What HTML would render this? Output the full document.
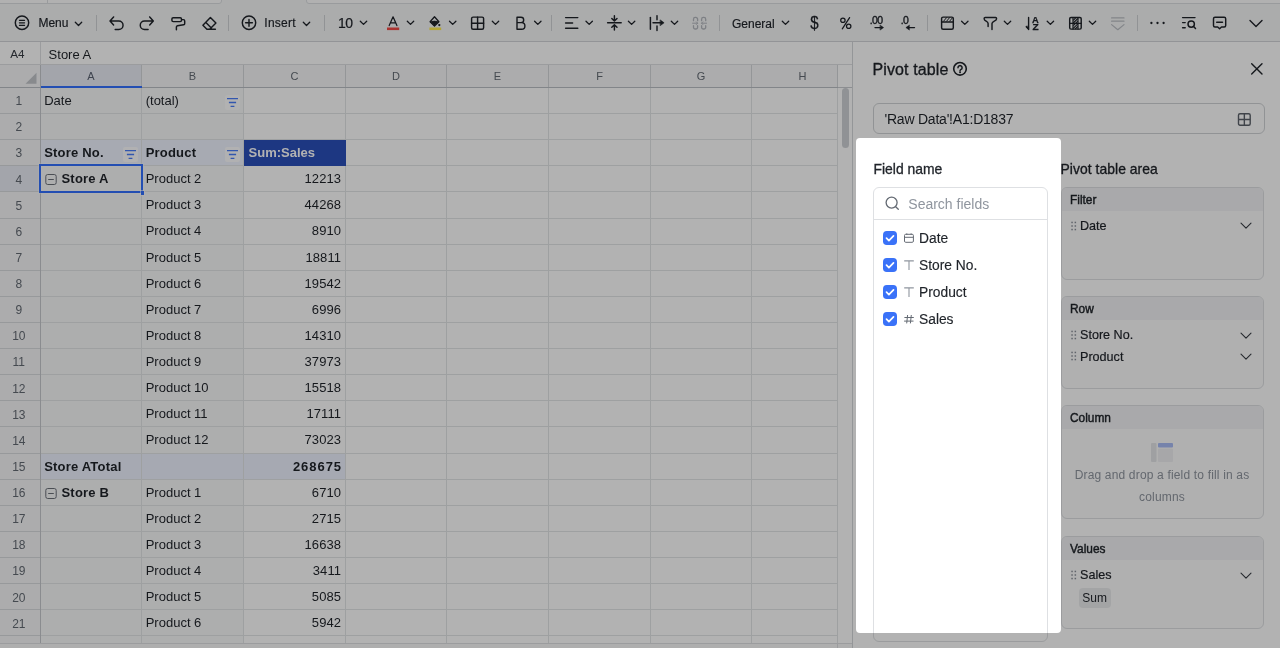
<!DOCTYPE html><html><head><meta charset="utf-8"><title>Pivot table</title><style>*{box-sizing:border-box;margin:0;padding:0}
html,body{width:1280px;height:648px;overflow:hidden;background:#fff}
body{font-family:"Liberation Sans",Arial,sans-serif;color:#1f2329;-webkit-font-smoothing:antialiased}
#app{will-change:transform;position:relative;width:1280px;height:648px;overflow:hidden;background:#fff}
/* ---- toolbar ---- */
#tb{position:absolute;left:0;top:0;width:1280px;height:41px;background:#f5f6f7}
#tbl{position:absolute;left:0;top:41px;width:1280px;height:2px;background:linear-gradient(#d3d5d8 50%,#e9eaec 50%)}
.tab{position:absolute;top:-2px;height:6px;background:#fefefe;border:1px solid #dcdee1}
.tabv{position:absolute;top:0;width:1px;height:3px;background:#dcdee1}
#tbsvg{position:absolute;left:0;top:0}
.tt{position:absolute;white-space:nowrap;color:#1f2329}
/* ---- formula bar ---- */
#fx{position:absolute;left:0;top:42px;width:852px;height:22px;background:#fff}
#fxl{position:absolute;left:0;top:64px;width:852px;height:1px;background:#dee0e3}
#fxv{position:absolute;left:40px;top:42px;width:1px;height:22px;background:#dee0e3}
/* ---- grid ---- */
#grid{position:absolute;left:0;top:0;width:853px;height:648px}
.ch{position:absolute;top:65px;height:22px;background:#f6f7f8;color:#646a73;font-size:11px;line-height:22px;text-align:center;border-bottom:0}
.ch.sel{background:#eaedf5;color:#5a6272}

.rh{position:absolute;left:0;width:40px;background:#f6f7f8;color:#646a73;font-size:12px;text-align:center;padding-right:2.400px;overflow:hidden}
.rh.sel{background:#eaedf5}
.c{position:absolute;font-size:13px;white-space:nowrap;overflow:hidden;padding:0 4px 0 4.200px;color:#1f2329}
.c.pv{background:#f8f9fa}
.c.b{font-weight:bold;letter-spacing:.2px}
.c.ca{padding-left:3.200px}
.c.cb{padding-left:3.700px}
.c.cc{padding-left:4.600px}
.c.num{text-align:right;padding-right:3.800px;letter-spacing:.12px}
.c.b.num{letter-spacing:.95px;padding-right:3px}
.c.hdr{background:#eff4ff}
.c.sum{background:#2a4fba;color:#fff;letter-spacing:0;z-index:3}
.c.tot{background:#eef3ff}
.fb{position:absolute;right:3px;top:7px}
.coll{vertical-align:-1.500px;margin-left:1.300px}
.hl{position:absolute;left:41px;width:797px;height:1px;background:#e3e5e7}
.hl.rhl{left:0;width:40px;background:#d9dbde}
.vl{position:absolute;width:1px;background:#e3e5e7}
.vl.hd{background:#d5d7da}
.vl.rhv{background:#c6c9cd}
#selbox{position:absolute;left:39px;top:164px;width:104px;height:29px;border:2px solid #3370ff;pointer-events:none;box-shadow:0 0 0 1px rgba(255,255,255,.35),inset 0 0 0 1px rgba(255,255,255,.35)}
#selh{position:absolute;left:140.500px;top:191px;width:3.500px;height:3.500px;background:#3370ff;box-shadow:0 0 0 1px rgba(255,255,255,.6)}
#vsb{position:absolute;left:838px;top:65px;width:14px;height:578px;background:#fff}
#vsbc{position:absolute;left:0;top:0;width:14px;height:23px;background:#fff;border-bottom:1px solid #c9ccd0}
#vthumb{position:absolute;left:4px;top:23px;width:7px;height:60px;border-radius:4px;background:#cfd2d6}
#bbar{position:absolute;left:0;top:643px;width:853px;height:5px;background:#fafafa;border-top:1px solid #dee0e3}
/* ---- panel ---- */
#pn{position:absolute;left:852px;top:42px;width:428px;height:606px;background:#fff;border-left:1px solid #d5d7da}
#pn .abs{position:absolute;white-space:nowrap}
.med{-webkit-text-stroke:.3px currentColor}
.bh .med{-webkit-text-stroke:.42px currentColor}
.med2{-webkit-text-stroke:.18px currentColor}
.box{position:absolute;left:208px;width:203px;border:1px solid #dee0e3;border-radius:6px;background:#fcfcfd;overflow:hidden}
.box .bh{height:23px;background:#f2f3f5;font-size:11.900px;line-height:24.600px;padding-left:8px;color:#1f2329}
.it{position:absolute;left:18px;font-size:13px;color:#1f2329;white-space:nowrap}
/* ---- spotlight ---- */
#spot{z-index:20;position:absolute;left:856px;top:138px;width:205px;height:494.500px;border-radius:4px;box-shadow:0 0 0 2000px rgba(0,0,0,.3);pointer-events:none}
#pc{position:absolute;left:0;top:0;width:1280px;height:648px}
#pc .abs{position:absolute;white-space:nowrap}
#pc .box{position:absolute}
#corner{position:absolute;left:0;top:65px;width:40px;height:22px;background:#f6f7f8}
#hdl{position:absolute;left:0;top:87px;width:852px;height:1px;background:#bbbfc4}
#tri{position:absolute;left:25px;top:72px}
#asel{position:absolute;left:41px;top:86px;width:101px;height:2px;background:#3370ff}
#bbv{position:absolute;left:837px;top:643px;width:1px;height:5px;background:#dee0e3}
</style></head><body><div id="app">
<div id="tb"></div><div id="tbl"></div>
<div class="tab" style="left:-2px;width:224px;border-radius:0 0 3px 0"></div><div class="tabv" style="left:47px"></div><div class="tab" style="left:306px;width:980px;border-radius:0 0 0 3px"></div>
<svg id="tbsvg" width="1280" height="42" viewBox="0 0 1280 42" fill="none" stroke="#1f2329" stroke-width="1.45" stroke-linecap="round" stroke-linejoin="round">
<!-- separators -->
<g stroke="#d0d3d6" stroke-width="1" stroke-linecap="butt"><path d="M96.5 15v16M228.5 15v16M324.5 15v16M551.5 15v16M719.5 15v16M927.5 15v16M1137.5 15v16"/></g>
<!-- menu -->
<circle cx="22" cy="22.8" r="6.7"/><path d="M19.4 20.3h5.2M19.4 22.8h5.2M19.4 25.3h5.2" stroke-width="1.15"/>
<!-- chevrons small -->
<g stroke-width="1.3">
<path d="M75.3 22.3l3.2 3.2 3.2-3.2"/>
<path d="M303.3 22.3l3.2 3.2 3.2-3.2"/>
<path d="M360.3 21.2l3.2 3.2 3.2-3.2"/>
<path d="M407.3 21.2l3.2 3.2 3.2-3.2"/>
<path d="M449.5 21.2l3.2 3.2 3.2-3.2"/>
<path d="M492.3 21.2l3.2 3.2 3.2-3.2"/>
<path d="M534.6 21.2l3.2 3.2 3.2-3.2"/>
<path d="M586 21.2l3.2 3.2 3.2-3.2"/>
<path d="M628.4 21.2l3.2 3.2 3.2-3.2"/>
<path d="M671.3 21.2l3.2 3.2 3.2-3.2"/>
<path d="M782.3 21.2l3.2 3.2 3.2-3.2"/>
<path d="M961.6 21.2l3.2 3.2 3.2-3.2"/>
<path d="M1004.3 21.2l3.2 3.2 3.2-3.2"/>
<path d="M1047.2 21.2l3.2 3.2 3.2-3.2"/>
<path d="M1089.3 21.2l3.2 3.2 3.2-3.2"/>
</g>
<!-- undo / redo -->
<path d="M113.6 16.9l-3.6 4 3.6 4M110.4 20.9h8.4a4.25 4.25 0 0 1 0 8.5h-3.6"/>
<path d="M149.7 16.9l3.6 4-3.6 4M152.9 20.9h-8.4a4.25 4.25 0 0 0 0 8.5h3.6"/>
<!-- paint roller -->
<rect x="171.900" y="17.700" width="9.600" height="3.900" rx="1.300"/><path d="M181.600 19.600h1.800a1.300 1.300 0 0 1 1.300 1.300v2.600a1.300 1.300 0 0 1-1.100 1.300l-6.100 1a1.300 1.300 0 0 0-1.100 1.300v2.700"/>
<!-- eraser -->
<path d="M210.400 17.600l5.500 5.500-6.200 6.200h-2.800l-4-4zM205.900 22.500l5.400 5.400M209.600 29.300h5.800"/>
<!-- insert -->
<circle cx="249" cy="22.8" r="6.7"/><path d="M245.6 22.8h6.8M249 19.4v6.8"/>
<!-- font color A -->
<path d="M389.200 25.600l3.850-8.800 3.850 8.800M390.500 22.800h5.100" stroke-width="1.250"/>
<rect x="387" y="27.5" width="12.2" height="2.6" fill="#f54a45" stroke="none"/>
<!-- fill -->
<path d="M434.500 16.800l4.400 5-4.400 4.200-4.400-4.200z" stroke-width="1.300"/><path d="M430.600 21.800q3.900-1.400 7.800 0l-3.900 3.800z" fill="#1f2329" stroke-width=".8"/><circle cx="439.300" cy="25.100" r="1.150" fill="#1f2329" stroke="none"/>
<rect x="429.4" y="27.5" width="11.8" height="2.6" fill="#ffec50" stroke="none"/>
<!-- borders -->
<rect x="471.6" y="17.1" width="12" height="12.2" rx="1.5"/><path d="M477.6 17.1v12.2M471.6 23.2h12"/>
<!-- bold -->
<path d="M517 17.2v12h4.6a3.3 3.3 0 0 0 0-6.6H517M521 22.6a2.7 2.7 0 0 0 0-5.4h-4" stroke-width="1.4"/>
<!-- align -->
<path d="M565.6 17.6h12.2M565.6 22.9h7M565.6 28.3h12.2"/>
<!-- valign -->
<path d="M607.6 22.8h13.6M614.4 15.8v5M611.8 18.4l2.6 2.6 2.6-2.6M614.4 30v-5M611.8 27.3l2.6-2.6 2.6 2.6"/>
<!-- overflow -->
<path d="M650.400 17.500v11.700" stroke-width="1.500"/><path d="M657 15.6v4.2M657 26v4.4M653 22.8h8"/><path d="M660.4 20.1l3.7 2.7-3.7 2.7z" fill="#1f2329" stroke-width=".6"/>
<!-- merge (disabled) -->
<g stroke="#b4b8be" stroke-width="1.300"><path d="M693.500 20.700v-1.500a1.800 1.800 0 0 1 1.800-1.800h.500a1.800 1.800 0 0 1 1.800 1.800v1.500M693.500 25.700v1.500a1.800 1.800 0 0 0 1.800 1.800h.500a1.800 1.800 0 0 0 1.800-1.800v-1.500M701.600 20.700v-1.500a1.800 1.800 0 0 1 1.800-1.800h.500a1.800 1.800 0 0 1 1.800 1.800v1.500M701.600 25.700v1.500a1.800 1.800 0 0 0 1.800 1.800h.500a1.800 1.800 0 0 0 1.800-1.800v-1.500"/><path d="M692.600 23.200h5M696.400 21.900l1.300 1.300-1.300 1.300M706.600 23.200h-5M702.800 21.900l-1.300 1.300 1.300 1.300" stroke-width="1"/></g>
<!-- percent -->
<g stroke-width="1.250"><circle cx="842.900" cy="20.200" r="2.200"/><circle cx="848.700" cy="26.200" r="2.200"/><path d="M849.600 17.600l-7.300 11.200"/></g>
<!-- dec inc -->
<path d="M875 27.600h6" stroke-width="1.400"/><path d="M880.300 25.300l3.300 2.300-3.300 2.300z" fill="#1f2329" stroke-width=".5"/>
<!-- dec dec -->
<path d="M914.500 27.600h-6" stroke-width="1.400"/><path d="M909.200 25.300l-3.300 2.300 3.300 2.300z" fill="#1f2329" stroke-width=".5"/>
<!-- cond format -->
<rect x="941.600" y="17.100" width="11.700" height="12.200" rx="1.500"/><path d="M941.600 22h11.700"/><path d="M943.600 21.200l3-3.600M946.600 21.200l3-3.600M949.600 21.200l3-3.600" stroke-width="1"/>
<!-- funnel -->
<path d="M988.100 26.600v-3.200c0-2.200-3.900-2.300-3.900-4.400v-.700a.900.900 0 0 1 .900-.900h10.500a.900.900 0 0 1 .900.900v.700c0 2.100-4.500 2.200-4.500 4.400v6"/>
<!-- sort -->
<path d="M1028.600 17.400v12M1026.300 26.800l2.300 2.600" stroke-width="1.400"/><path d="M1026.200 26.400l2.400 3.200v-3.200z" fill="#1f2329" stroke-width=".4"/>
<!-- pivot icon -->
<rect x="1069.700" y="17.500" width="11.500" height="11.600" rx="1.300"/><path d="M1073 17.500v11.600M1078 17.500v11.600M1069.700 23.300h11.500" stroke-width="1.200"/><path d="M1073.300 20.300l2.600-2.600M1073.300 23l4.500-4.500M1073.300 25.700l4.500-4.500M1073.300 28.400l4.500-4.500M1075.200 29l2.600-2.600" stroke-width="1.150" stroke-linecap="butt"/>
<!-- disabled icon -->
<g stroke="#bbbfc4" stroke-width="1.200"><path d="M1111.600 17.900h12.400M1111.600 21.200h12.400M1111.600 24.600l6.200 5.100 6.200-5.100"/></g>
<!-- dots -->
<g fill="#1f2329" stroke="none"><circle cx="1151.400" cy="23" r="1.150"/><circle cx="1157.500" cy="23" r="1.150"/><circle cx="1163.600" cy="23" r="1.150"/></g>
<!-- find -->
<path d="M1182.600 17.600h12.400M1182.600 22.600h2.600M1182.600 27.700h2.600"/><circle cx="1191.200" cy="24.100" r="3.200"/><path d="M1193.600 26.600l1.900 2"/>
<!-- comment -->
<path d="M1215 17.300h9.200a1.500 1.500 0 0 1 1.500 1.500v6.700a1.500 1.500 0 0 1-1.500 1.500h-2.700l-1.900 1.800-1.900-1.800H1215a1.500 1.500 0 0 1-1.500-1.500v-6.700a1.500 1.500 0 0 1 1.500-1.500zM1216.700 22.300h5.800"/>
<!-- big chevron -->
<path d="M1250 20.600l6 6 6-6" stroke-width="1.400"/>
<!-- texts in svg -->
<g stroke="none" fill="#1f2329" font-family="Liberation Sans, Arial, sans-serif">
<text x="1031.900" y="22.700" font-size="9.300" font-weight="bold" stroke="#1f2329" stroke-width=".25">A</text>
<text x="1032.400" y="29.900" font-size="9.300" font-weight="bold" stroke="#1f2329" stroke-width=".25" textLength="6.2" lengthAdjust="spacingAndGlyphs">Z</text>
<text x="869.700" y="23.800" font-size="10.500" letter-spacing="-.6" stroke="#1f2329" stroke-width=".35">.00</text>
<text x="900.700" y="23.800" font-size="10.500" letter-spacing="-.6" stroke="#1f2329" stroke-width=".35">.0</text>
<text transform="translate(810.300 29.100) scale(.86 1)" font-size="17.500" stroke="#1f2329" stroke-width=".25">$</text>
</g>
</svg>
<div class="tt med2" style="left:38.400px;top:15.500px;font-size:12px;line-height:14px">Menu</div>
<div class="tt med2" style="left:264.300px;top:15.500px;font-size:12px;line-height:14px;letter-spacing:.25px">Insert</div>
<div class="tt" style="left:338px;top:14px;font-size:14px;line-height:18px;letter-spacing:-.5px;-webkit-text-stroke:.2px #1f2329">10</div>
<div class="tt med2" style="left:732px;top:16.800px;font-size:12px;line-height:14px">General</div>

<div id="fx"></div><div id="fxl"></div><div id="fxv"></div>
<div class="tt" style="left:10.3px;top:46.500px;font-size:11.700px;line-height:14px;color:#373c43">A4</div>
<div class="tt" style="left:48.600px;top:46.600px;font-size:13px;line-height:15px">Store A</div>

<div id="grid"><div id="corner"></div><svg id="tri" width="12" height="12" viewBox="0 0 12 12"><path d="M11.500 .800v11h-11z" fill="#c3c6cb"/></svg>
<div class="ch sel" style="left:41px;width:100px">A</div>
<div class="ch" style="left:142px;width:101px">B</div>
<div class="ch" style="left:244px;width:101px">C</div>
<div class="ch" style="left:346px;width:100px">D</div>
<div class="ch" style="left:447px;width:101px">E</div>
<div class="ch" style="left:549px;width:101px">F</div>
<div class="ch" style="left:651px;width:100px">G</div>
<div class="ch" style="left:752px;width:101px">H</div>
<div class="vl hd" style="left:141px;top:65px;height:22px"></div>
<div class="vl hd" style="left:243px;top:65px;height:22px"></div>
<div class="vl hd" style="left:345px;top:65px;height:22px"></div>
<div class="vl hd" style="left:446px;top:65px;height:22px"></div>
<div class="vl hd" style="left:548px;top:65px;height:22px"></div>
<div class="vl hd" style="left:650px;top:65px;height:22px"></div>
<div class="vl hd" style="left:751px;top:65px;height:22px"></div>
<div class="vl hd" style="left:837px;top:65px;height:22px"></div>
<div class="rh" style="top:88px;height:25px;line-height:27px">1</div>
<div class="c ca pv" style="left:41px;top:88px;width:100px;height:25px;line-height:25px">Date</div>
<div class="c cb pv" style="left:142px;top:88px;width:101px;height:25px;line-height:25px">(total)<svg class="fb" width="15" height="15" viewBox="0 0 15 15"><rect width="15" height="15" rx="2" fill="#fff" fill-opacity=".9"/><path d="M2 3.600h11M3.900 7.500h7.200M5.600 11.300h3.800" stroke="#4a7dfa" stroke-width="1.350" fill="none"/></svg></div>
<div class="c cc num" style="left:244px;top:88px;width:101px;height:25px;line-height:25px"></div>
<div class="rh" style="top:114px;height:25px;line-height:27px">2</div>
<div class="c ca pv" style="left:41px;top:114px;width:100px;height:25px;line-height:26px"></div>
<div class="c cb pv" style="left:142px;top:114px;width:101px;height:25px;line-height:26px"></div>
<div class="c cc num" style="left:244px;top:114px;width:101px;height:25px;line-height:26px"></div>
<div class="rh" style="top:140px;height:25px;line-height:27px">3</div>
<div class="c ca pv b hdr" style="left:41px;top:140px;width:100px;height:25px;line-height:26px">Store No.<svg class="fb" width="15" height="15" viewBox="0 0 15 15"><rect width="15" height="15" rx="2" fill="#fff" fill-opacity=".9"/><path d="M2 3.600h11M3.900 7.500h7.200M5.600 11.300h3.800" stroke="#4a7dfa" stroke-width="1.350" fill="none"/></svg></div>
<div class="c cb pv b hdr" style="left:142px;top:140px;width:101px;height:25px;line-height:26px">Product<svg class="fb" width="15" height="15" viewBox="0 0 15 15"><rect width="15" height="15" rx="2" fill="#fff" fill-opacity=".9"/><path d="M2 3.600h11M3.900 7.500h7.200M5.600 11.300h3.800" stroke="#4a7dfa" stroke-width="1.350" fill="none"/></svg></div>
<div class="c cc b sum" style="left:244px;top:140px;width:102px;height:26px;line-height:26px">Sum:Sales</div>
<div class="rh sel" style="top:166px;height:25px;line-height:28px">4</div>
<div class="c ca pv b" style="left:41px;top:166px;width:100px;height:25px;line-height:26px"><svg class="coll" width="12" height="12" viewBox="0 0 12 12"><rect x=".8" y="1.500" width="10.400" height="10" rx="1.900" fill="none" stroke="#6b7079" stroke-width="1"/><path d="M3.200 6.500h5.600" stroke="#6b7079" stroke-width="1"/></svg><span style="margin-left:4px">Store A</span></div>
<div class="c cb pv" style="left:142px;top:166px;width:101px;height:25px;line-height:26px">Product 2</div>
<div class="c cc num" style="left:244px;top:166px;width:101px;height:25px;line-height:26px">12213</div>
<div class="rh" style="top:192px;height:26px;line-height:28px">5</div>
<div class="c ca pv" style="left:41px;top:192px;width:100px;height:26px;line-height:26px"></div>
<div class="c cb pv" style="left:142px;top:192px;width:101px;height:26px;line-height:26px">Product 3</div>
<div class="c cc num" style="left:244px;top:192px;width:101px;height:26px;line-height:26px">44268</div>
<div class="rh" style="top:219px;height:25px;line-height:26px">6</div>
<div class="c ca pv" style="left:41px;top:219px;width:100px;height:25px;line-height:24px"></div>
<div class="c cb pv" style="left:142px;top:219px;width:101px;height:25px;line-height:24px">Product 4</div>
<div class="c cc num" style="left:244px;top:219px;width:101px;height:25px;line-height:24px">8910</div>
<div class="rh" style="top:245px;height:25px;line-height:26px">7</div>
<div class="c ca pv" style="left:41px;top:245px;width:100px;height:25px;line-height:25px"></div>
<div class="c cb pv" style="left:142px;top:245px;width:101px;height:25px;line-height:25px">Product 5</div>
<div class="c cc num" style="left:244px;top:245px;width:101px;height:25px;line-height:25px">18811</div>
<div class="rh" style="top:271px;height:25px;line-height:27px">8</div>
<div class="c ca pv" style="left:41px;top:271px;width:100px;height:25px;line-height:25px"></div>
<div class="c cb pv" style="left:142px;top:271px;width:101px;height:25px;line-height:25px">Product 6</div>
<div class="c cc num" style="left:244px;top:271px;width:101px;height:25px;line-height:25px">19542</div>
<div class="rh" style="top:297px;height:25px;line-height:27px">9</div>
<div class="c ca pv" style="left:41px;top:297px;width:100px;height:25px;line-height:25px"></div>
<div class="c cb pv" style="left:142px;top:297px;width:101px;height:25px;line-height:25px">Product 7</div>
<div class="c cc num" style="left:244px;top:297px;width:101px;height:25px;line-height:25px">6996</div>
<div class="rh" style="top:323px;height:25px;line-height:27px">10</div>
<div class="c ca pv" style="left:41px;top:323px;width:100px;height:25px;line-height:25px"></div>
<div class="c cb pv" style="left:142px;top:323px;width:101px;height:25px;line-height:25px">Product 8</div>
<div class="c cc num" style="left:244px;top:323px;width:101px;height:25px;line-height:25px">14310</div>
<div class="rh" style="top:349px;height:25px;line-height:27px">11</div>
<div class="c ca pv" style="left:41px;top:349px;width:100px;height:25px;line-height:26px"></div>
<div class="c cb pv" style="left:142px;top:349px;width:101px;height:25px;line-height:26px">Product 9</div>
<div class="c cc num" style="left:244px;top:349px;width:101px;height:25px;line-height:26px">37973</div>
<div class="rh" style="top:375px;height:25px;line-height:28px">12</div>
<div class="c ca pv" style="left:41px;top:375px;width:100px;height:25px;line-height:26px"></div>
<div class="c cb pv" style="left:142px;top:375px;width:101px;height:25px;line-height:26px">Product 10</div>
<div class="c cc num" style="left:244px;top:375px;width:101px;height:25px;line-height:26px">15518</div>
<div class="rh" style="top:401px;height:25px;line-height:28px">13</div>
<div class="c ca pv" style="left:41px;top:401px;width:100px;height:25px;line-height:26px"></div>
<div class="c cb pv" style="left:142px;top:401px;width:101px;height:25px;line-height:26px">Product 11</div>
<div class="c cc num" style="left:244px;top:401px;width:101px;height:25px;line-height:26px">17111</div>
<div class="rh" style="top:427px;height:26px;line-height:28px">14</div>
<div class="c ca pv" style="left:41px;top:427px;width:100px;height:26px;line-height:26px"></div>
<div class="c cb pv" style="left:142px;top:427px;width:101px;height:26px;line-height:26px">Product 12</div>
<div class="c cc num" style="left:244px;top:427px;width:101px;height:26px;line-height:26px">73023</div>
<div class="rh" style="top:454px;height:25px;line-height:26px">15</div>
<div class="c ca pv b tot" style="left:41px;top:454px;width:100px;height:25px;line-height:25px">Store ATotal</div>
<div class="c cb pv b tot" style="left:142px;top:454px;width:101px;height:25px;line-height:25px"></div>
<div class="c cc b tot num" style="left:244px;top:454px;width:101px;height:25px;line-height:25px">268675</div>
<div class="rh" style="top:480px;height:25px;line-height:27px">16</div>
<div class="c ca pv b" style="left:41px;top:480px;width:100px;height:25px;line-height:25px"><svg class="coll" width="12" height="12" viewBox="0 0 12 12"><rect x=".8" y="1.500" width="10.400" height="10" rx="1.900" fill="none" stroke="#6b7079" stroke-width="1"/><path d="M3.200 6.500h5.600" stroke="#6b7079" stroke-width="1"/></svg><span style="margin-left:4px">Store B</span></div>
<div class="c cb pv" style="left:142px;top:480px;width:101px;height:25px;line-height:25px">Product 1</div>
<div class="c cc num" style="left:244px;top:480px;width:101px;height:25px;line-height:25px">6710</div>
<div class="rh" style="top:506px;height:25px;line-height:27px">17</div>
<div class="c ca pv" style="left:41px;top:506px;width:100px;height:25px;line-height:25px"></div>
<div class="c cb pv" style="left:142px;top:506px;width:101px;height:25px;line-height:25px">Product 2</div>
<div class="c cc num" style="left:244px;top:506px;width:101px;height:25px;line-height:25px">2715</div>
<div class="rh" style="top:532px;height:25px;line-height:27px">18</div>
<div class="c ca pv" style="left:41px;top:532px;width:100px;height:25px;line-height:25px"></div>
<div class="c cb pv" style="left:142px;top:532px;width:101px;height:25px;line-height:25px">Product 3</div>
<div class="c cc num" style="left:244px;top:532px;width:101px;height:25px;line-height:25px">16638</div>
<div class="rh" style="top:558px;height:25px;line-height:27px">19</div>
<div class="c ca pv" style="left:41px;top:558px;width:100px;height:25px;line-height:26px"></div>
<div class="c cb pv" style="left:142px;top:558px;width:101px;height:25px;line-height:26px">Product 4</div>
<div class="c cc num" style="left:244px;top:558px;width:101px;height:25px;line-height:26px">3411</div>
<div class="rh" style="top:584px;height:25px;line-height:28px">20</div>
<div class="c ca pv" style="left:41px;top:584px;width:100px;height:25px;line-height:26px"></div>
<div class="c cb pv" style="left:142px;top:584px;width:101px;height:25px;line-height:26px">Product 5</div>
<div class="c cc num" style="left:244px;top:584px;width:101px;height:25px;line-height:26px">5085</div>
<div class="rh" style="top:610px;height:25px;line-height:28px">21</div>
<div class="c ca pv" style="left:41px;top:610px;width:100px;height:25px;line-height:26px"></div>
<div class="c cb pv" style="left:142px;top:610px;width:101px;height:25px;line-height:26px">Product 6</div>
<div class="c cc num" style="left:244px;top:610px;width:101px;height:25px;line-height:26px">5942</div>
<div class="rh" style="top:636px;height:7px;line-height:28px"></div>
<div class="c ca pv" style="left:41px;top:636px;width:100px;height:7px;line-height:26px"></div>
<div class="c cb pv" style="left:142px;top:636px;width:101px;height:7px;line-height:26px"></div>
<div class="c cc num" style="left:244px;top:636px;width:101px;height:7px;line-height:26px"></div>
<div class="hl" style="top:113px"></div>
<div class="hl rhl" style="top:113px"></div>
<div class="hl" style="top:139px"></div>
<div class="hl rhl" style="top:139px"></div>
<div class="hl" style="top:165px"></div>
<div class="hl rhl" style="top:165px"></div>
<div class="hl" style="top:191px"></div>
<div class="hl rhl" style="top:191px"></div>
<div class="hl" style="top:218px"></div>
<div class="hl rhl" style="top:218px"></div>
<div class="hl" style="top:244px"></div>
<div class="hl rhl" style="top:244px"></div>
<div class="hl" style="top:270px"></div>
<div class="hl rhl" style="top:270px"></div>
<div class="hl" style="top:296px"></div>
<div class="hl rhl" style="top:296px"></div>
<div class="hl" style="top:322px"></div>
<div class="hl rhl" style="top:322px"></div>
<div class="hl" style="top:348px"></div>
<div class="hl rhl" style="top:348px"></div>
<div class="hl" style="top:374px"></div>
<div class="hl rhl" style="top:374px"></div>
<div class="hl" style="top:400px"></div>
<div class="hl rhl" style="top:400px"></div>
<div class="hl" style="top:426px"></div>
<div class="hl rhl" style="top:426px"></div>
<div class="hl" style="top:453px"></div>
<div class="hl rhl" style="top:453px"></div>
<div class="hl" style="top:479px"></div>
<div class="hl rhl" style="top:479px"></div>
<div class="hl" style="top:505px"></div>
<div class="hl rhl" style="top:505px"></div>
<div class="hl" style="top:531px"></div>
<div class="hl rhl" style="top:531px"></div>
<div class="hl" style="top:557px"></div>
<div class="hl rhl" style="top:557px"></div>
<div class="hl" style="top:583px"></div>
<div class="hl rhl" style="top:583px"></div>
<div class="hl" style="top:609px"></div>
<div class="hl rhl" style="top:609px"></div>
<div class="hl" style="top:635px"></div>
<div class="hl rhl" style="top:635px"></div>
<div class="vl" style="left:141px;top:88px;height:555px"></div>
<div class="vl" style="left:243px;top:88px;height:555px"></div>
<div class="vl" style="left:345px;top:88px;height:555px"></div>
<div class="vl" style="left:446px;top:88px;height:555px"></div>
<div class="vl" style="left:548px;top:88px;height:555px"></div>
<div class="vl" style="left:650px;top:88px;height:555px"></div>
<div class="vl" style="left:751px;top:88px;height:555px"></div>
<div class="vl" style="left:837px;top:88px;height:555px"></div>
<div class="vl rhv" style="left:40px;top:65px;height:578px"></div>
<div id="hdl"></div><div id="asel"></div><div id="selbox"></div><div id="selh"></div>
<div id="vsb"><div id="vsbc"></div><div id="vthumb"></div></div><div id="bbar"></div><div id="bbv"></div>
</div>
<div id="pn"></div>
<div id="pc">
<div class="abs med" style="left:872.600px;top:59.900px;font-size:16px;line-height:20px;letter-spacing:.1px">Pivot table</div>
<svg class="abs" style="left:952px;top:61px" width="16" height="16" viewBox="0 0 16 16"><circle cx="8" cy="7.800" r="6.300" fill="none" stroke="#1f2329" stroke-width="1.600"/><path d="M6 6.700a2.050 2.050 0 1 1 3.100 1.750c-.7.400-1.050.750-1.050 1.350" fill="none" stroke="#1f2329" stroke-width="1.500" stroke-linecap="round"/><circle cx="8.050" cy="11.300" r=".95" fill="#1f2329"/></svg>
<svg class="abs" style="left:1249px;top:61px" width="16" height="16" viewBox="0 0 16 16"><path d="M2.700 2.800l10.300 10.300M13 2.800L2.700 13.100" stroke="#1f2329" stroke-width="1.400" fill="none" stroke-linecap="round"/></svg>
<div class="abs" style="left:873px;top:103px;width:392px;height:31px;border:1px solid #d0d3d6;border-radius:6px;background:#fff"></div>
<div class="abs" style="left:884.5px;top:110px;font-size:14px;line-height:18px;letter-spacing:-.22px">'Raw Data'!A1:D1837</div>
<svg class="abs" style="left:1237px;top:111.700px" width="15" height="15" viewBox="0 0 15 15"><rect x="1.500" y="1.700" width="11.700" height="11.600" rx="1.500" fill="none" stroke="#5c626b" stroke-width="1.400"/><path d="M7.350 1.700v11.600M1.500 7.500h11.700" stroke="#5c626b" stroke-width="1.400"/></svg>
<!-- field name -->
<div class="abs" style="left:873.500px;top:160.200px;font-size:13.900px;-webkit-text-stroke:.32px #1f2329;line-height:18px">Field name</div>
<div class="abs" style="left:873px;top:187px;width:175px;height:455px;border:1px solid #dee0e3;border-radius:6px;background:#fff"></div>
<div class="abs" style="left:874px;top:219px;width:173px;height:1px;background:#dee0e3"></div>
<svg class="abs" style="left:884px;top:195px" width="16" height="16" viewBox="0 0 16 16"><circle cx="7.6" cy="7.6" r="5.5" fill="none" stroke="#646a73" stroke-width="1.3"/><path d="M11.7 11.7l2.6 2.6" stroke="#646a73" stroke-width="1.3" stroke-linecap="round"/></svg>
<div class="abs" style="left:908.300px;top:194.700px;font-size:14px;line-height:18px;color:#8f959e">Search fields</div>
<svg class="abs" style="left:883px;top:231px" width="14" height="14" viewBox="0 0 14 14"><rect width="14" height="14" rx="3.800" fill="#3a72f8"/><path d="M3.5 7.2l2.4 2.4 4.6-4.8" fill="none" stroke="#fff" stroke-width="1.7" stroke-linecap="round" stroke-linejoin="round"/></svg>
<svg class="abs" style="left:903px;top:232px" width="12" height="12" viewBox="0 0 12 12"><rect x="1.500" y="2.300" width="8.900" height="8" rx="1.200" fill="none" stroke="#646a73" stroke-width="1"/><path d="M1.500 5.300h8.900M3.800 1.400v1.400M8.100 1.400v1.400" stroke="#646a73" stroke-width="1"/></svg>
<div class="abs" style="left:919px;top:229.7px;font-size:13.800px;-webkit-text-stroke:.15px #1f2329;line-height:18px">Date</div>
<svg class="abs" style="left:883px;top:258px" width="14" height="14" viewBox="0 0 14 14"><rect width="14" height="14" rx="3.800" fill="#3a72f8"/><path d="M3.5 7.2l2.4 2.4 4.6-4.8" fill="none" stroke="#fff" stroke-width="1.7" stroke-linecap="round" stroke-linejoin="round"/></svg>
<svg class="abs" style="left:903px;top:259px" width="12" height="12" viewBox="0 0 12 12"><path d="M1.2 1.9h9.6M6 1.9v9" stroke="#8f959e" stroke-width="1.1" fill="none"/></svg>
<div class="abs" style="left:919px;top:256.7px;font-size:13.800px;-webkit-text-stroke:.15px #1f2329;line-height:18px">Store No.</div>
<svg class="abs" style="left:883px;top:285px" width="14" height="14" viewBox="0 0 14 14"><rect width="14" height="14" rx="3.800" fill="#3a72f8"/><path d="M3.5 7.2l2.4 2.4 4.6-4.8" fill="none" stroke="#fff" stroke-width="1.7" stroke-linecap="round" stroke-linejoin="round"/></svg>
<svg class="abs" style="left:903px;top:286px" width="12" height="12" viewBox="0 0 12 12"><path d="M1.2 1.9h9.6M6 1.9v9" stroke="#8f959e" stroke-width="1.1" fill="none"/></svg>
<div class="abs" style="left:919px;top:283.7px;font-size:13.800px;-webkit-text-stroke:.15px #1f2329;line-height:18px">Product</div>
<svg class="abs" style="left:883px;top:312px" width="14" height="14" viewBox="0 0 14 14"><rect width="14" height="14" rx="3.800" fill="#3a72f8"/><path d="M3.5 7.2l2.4 2.4 4.6-4.8" fill="none" stroke="#fff" stroke-width="1.7" stroke-linecap="round" stroke-linejoin="round"/></svg>
<svg class="abs" style="left:903px;top:313px" width="12" height="12" viewBox="0 0 12 12"><path d="M1.400 4.500h9.400M1.100 8.100h9.400M4.600 2l-.9 8.400M8.300 2l-.9 8.400" stroke="#646a73" stroke-width="1" fill="none"/></svg>
<div class="abs" style="left:919px;top:310.7px;font-size:13.800px;-webkit-text-stroke:.15px #1f2329;line-height:18px">Sales</div>
<div class="abs" style="left:1060.500px;top:160.200px;font-size:13.900px;-webkit-text-stroke:.32px #1f2329;line-height:18px;letter-spacing:.05px">Pivot table area</div>
<div class="abs box" style="left:1061px;top:187px;width:203px;height:93px"><div class="bh"><span class="med">Filter</span></div></div><svg class="abs" style="left:1070.750px;top:220.6px" width="6" height="10" viewBox="0 0 6 10"><g fill="#8a9099"><rect x=".3" y=".7" width="1.500" height="1.500"/><rect x="3.600" y=".7" width="1.500" height="1.500"/><rect x=".3" y="4.250" width="1.500" height="1.500"/><rect x="3.600" y="4.250" width="1.500" height="1.500"/><rect x=".3" y="7.800" width="1.500" height="1.500"/><rect x="3.600" y="7.800" width="1.500" height="1.500"/></g></svg><div class="abs" style="left:1080px;top:216.9px;font-size:12.600px;-webkit-text-stroke:.2px #1f2329;line-height:18px">Date</div><svg class="abs" style="left:1240px;top:222.1px" width="12" height="8" viewBox="0 0 12 8"><path d="M1 1.2l5 5 5-5" fill="none" stroke="#373c43" stroke-width="1.100" stroke-linecap="round" stroke-linejoin="round"/></svg>
<div class="abs box" style="left:1061px;top:296px;width:203px;height:93px"><div class="bh"><span class="med">Row</span></div></div><svg class="abs" style="left:1070.750px;top:330px" width="6" height="10" viewBox="0 0 6 10"><g fill="#8a9099"><rect x=".3" y=".7" width="1.500" height="1.500"/><rect x="3.600" y=".7" width="1.500" height="1.500"/><rect x=".3" y="4.250" width="1.500" height="1.500"/><rect x="3.600" y="4.250" width="1.500" height="1.500"/><rect x=".3" y="7.800" width="1.500" height="1.500"/><rect x="3.600" y="7.800" width="1.500" height="1.500"/></g></svg><div class="abs" style="left:1080px;top:326.3px;font-size:12.600px;-webkit-text-stroke:.2px #1f2329;line-height:18px">Store No.</div><svg class="abs" style="left:1240px;top:331.5px" width="12" height="8" viewBox="0 0 12 8"><path d="M1 1.2l5 5 5-5" fill="none" stroke="#373c43" stroke-width="1.100" stroke-linecap="round" stroke-linejoin="round"/></svg><svg class="abs" style="left:1070.750px;top:351.3px" width="6" height="10" viewBox="0 0 6 10"><g fill="#8a9099"><rect x=".3" y=".7" width="1.500" height="1.500"/><rect x="3.600" y=".7" width="1.500" height="1.500"/><rect x=".3" y="4.250" width="1.500" height="1.500"/><rect x="3.600" y="4.250" width="1.500" height="1.500"/><rect x=".3" y="7.800" width="1.500" height="1.500"/><rect x="3.600" y="7.800" width="1.500" height="1.500"/></g></svg><div class="abs" style="left:1080px;top:347.6px;font-size:12.600px;-webkit-text-stroke:.2px #1f2329;line-height:18px">Product</div><svg class="abs" style="left:1240px;top:352.8px" width="12" height="8" viewBox="0 0 12 8"><path d="M1 1.2l5 5 5-5" fill="none" stroke="#373c43" stroke-width="1.100" stroke-linecap="round" stroke-linejoin="round"/></svg>
<div class="abs box" style="left:1061px;top:405px;width:203px;height:114px"><div class="bh"><span class="med">Column</span></div></div><svg class="abs" style="left:1151px;top:443px" width="22" height="19" viewBox="0 0 22 19"><rect x="0" y="0" width="5.5" height="19" rx="1" fill="#e4e6e8"/><rect x="7" y="0" width="15" height="4.6" rx="1" fill="#a9bcf5"/><rect x="7" y="5.6" width="15" height="13.4" rx="1" fill="#eff0f2"/></svg><div class="abs" style="left:1061px;top:464.800px;width:202px;text-align:center;font-size:12px;line-height:21.700px;color:#8f959e;white-space:normal;letter-spacing:.17px">Drag and drop a field to fill in as<br>columns</div>
<div class="abs box" style="left:1061px;top:536px;width:203px;height:93px"><div class="bh"><span class="med">Values</span></div></div><svg class="abs" style="left:1070.750px;top:570px" width="6" height="10" viewBox="0 0 6 10"><g fill="#8a9099"><rect x=".3" y=".7" width="1.500" height="1.500"/><rect x="3.600" y=".7" width="1.500" height="1.500"/><rect x=".3" y="4.250" width="1.500" height="1.500"/><rect x="3.600" y="4.250" width="1.500" height="1.500"/><rect x=".3" y="7.800" width="1.500" height="1.500"/><rect x="3.600" y="7.800" width="1.500" height="1.500"/></g></svg><div class="abs" style="left:1080px;top:566.3px;font-size:12.600px;-webkit-text-stroke:.2px #1f2329;line-height:18px">Sales</div><svg class="abs" style="left:1240px;top:571.5px" width="12" height="8" viewBox="0 0 12 8"><path d="M1 1.2l5 5 5-5" fill="none" stroke="#373c43" stroke-width="1.100" stroke-linecap="round" stroke-linejoin="round"/></svg><div class="abs" style="left:1078.700px;top:588px;width:32px;height:19.500px;border-radius:4px;background:#eaebed;font-size:12px;line-height:21px;text-align:center;color:#1f2329">Sum</div>
</div>

<div id="spot"></div>
</div></body></html>
